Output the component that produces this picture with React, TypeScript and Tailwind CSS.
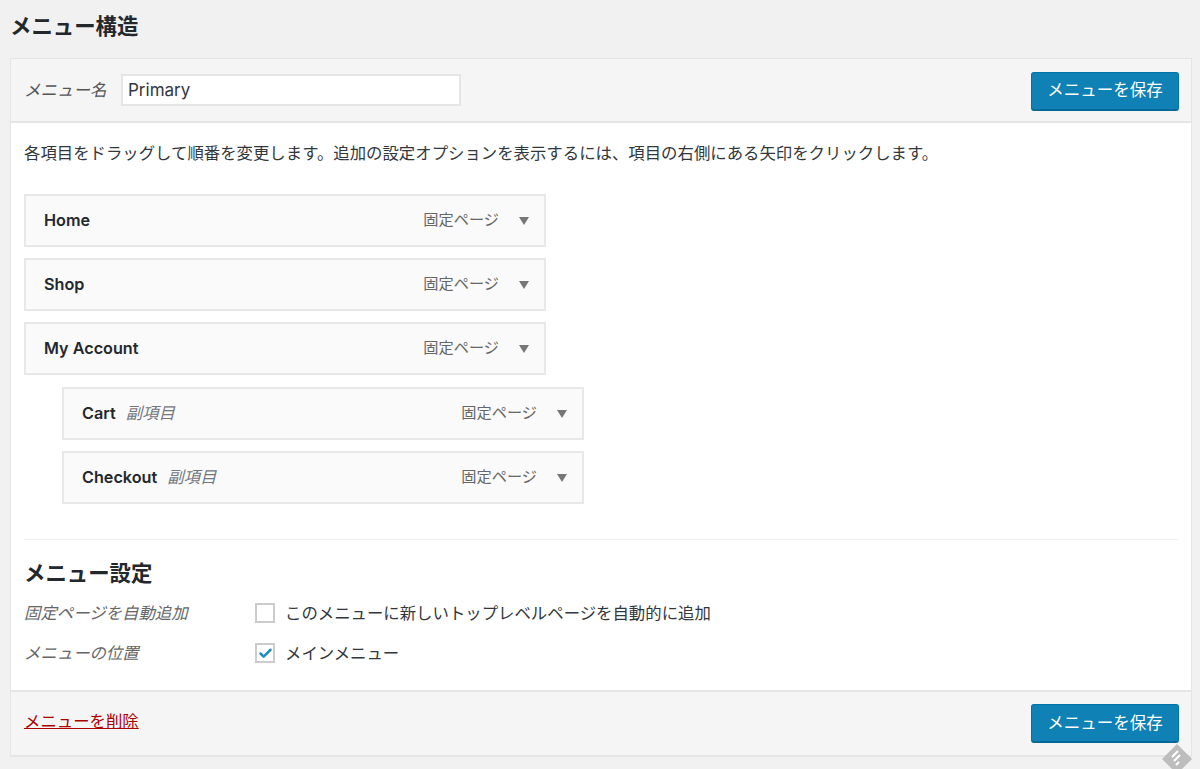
import { Check } from 'lucide-react';

const font = { fontFamily: 'Inter, "Noto Sans CJK JP", sans-serif' };

function SaveButton() {
  return (
    <button className="h-[39px] w-[148px] rounded-[3px] border border-[#0073aa] border-b-[#006799] border-b-2 bg-[#0f81b5] text-[16.5px] leading-none text-white">
      メニューを保存
    </button>
  );
}

function MenuItem({ title, sub, nested }: { title: string; sub?: boolean; nested?: boolean }) {
  return (
    <div
      className={`flex h-[53px] w-[522px] items-center border-2 border-[#e8e8e8] bg-[#fafafa] pl-[18px] pr-[15px] ${nested ? 'ml-[38px]' : ''}`}
    >
      <span className="text-[16.2px] font-semibold text-[#23282d]">{title}</span>
      {sub && <span className="ml-[10px] text-[16.4px] italic text-[#72777c]">副項目</span>}
      <span className="ml-auto mr-[20px] text-[15.2px] text-[#666]">固定ページ</span>
      <svg width="10" height="8" viewBox="0 0 10 8">
        <path d="M0 0h10L5 8z" fill="#777" />
      </svg>
    </div>
  );
}

export default function App() {
  return (
    <div style={font} className="relative h-[769px] w-[1200px] overflow-hidden bg-[#f1f1f1] pl-[10px] text-[#32373c]">
      <h2 className="flex h-[58px] items-center pb-[6px] text-[21.4px] font-bold text-[#23282d]">メニュー構造</h2>
      <div className="w-[1182px] border border-[#e5e5e5] bg-white shadow-[0_1px_1px_rgba(0,0,0,0.04)]">
        <div className="flex h-[64px] items-center border-b-2 border-[#e5e5e5] bg-[#f5f5f5] pl-[13px] pr-[12px]">
          <label className="w-[97px] text-[16.5px] italic text-[#555]">メニュー名</label>
          <input
            readOnly
            value="Primary"
            className="h-[32px] w-[340px] border-2 border-[#e5e5e5] bg-white px-[5px] text-[17px] text-[#32373c]"
          />
          <div className="ml-auto mt-[2px]">
            <SaveButton />
          </div>
        </div>
        <div className="px-[13px]">
          <p className="pt-[18px] text-[16.4px] leading-[24px]">
            各項目をドラッグして順番を変更します。追加の設定オプションを表示するには、項目の右側にある矢印をクリックします。
          </p>
          <div className="mt-[29px] flex flex-col gap-[11px]">
            <MenuItem title="Home" />
            <MenuItem title="Shop" />
            <div className="mb-px">
              <MenuItem title="My Account" />
            </div>
            <MenuItem title="Cart" sub nested />
            <MenuItem title="Checkout" sub nested />
          </div>
          <div className="mt-[35px] border-t border-[#eeeeee]" />
          <h3 className="mt-[20px] text-[21.4px] font-bold leading-[26px] text-[#23282d]">メニュー設定</h3>
          <div className="mt-[17px] flex h-[40px] items-start">
            <span className="w-[231px] text-[16.4px] italic leading-[20px] text-[#666]">固定ページを自動追加</span>
            <span className="h-[20px] w-[20px] border-2 border-[#ccc] bg-white" />
            <span className="ml-[10px] text-[16.4px] leading-[20px]">このメニューに新しいトップレベルページを自動的に追加</span>
          </div>
          <div className="flex h-[47px] items-start">
            <span className="w-[231px] text-[16.4px] italic leading-[20px] text-[#666]">メニューの位置</span>
            <span className="flex h-[20px] w-[20px] items-center justify-center border-2 border-[#ccc] bg-white">
              <Check size={15} strokeWidth={4} className="text-[#1e8cbe]" />
            </span>
            <span className="ml-[10px] text-[16.4px] leading-[20px]">メインメニュー</span>
          </div>
        </div>
        <div className="flex h-[65px] items-center justify-between border-t-2 border-[#e5e5e5] bg-[#f5f5f5] pl-[13px] pr-[12px]">
          <a className="-translate-y-[2px] text-[16.4px] text-[#a00] underline">メニューを削除</a>
          <SaveButton />
        </div>
      </div>
      <svg width="32" height="32" viewBox="0 0 32 32" className="absolute left-[1161px] top-[743px]">
        <path d="M16 1l15 15-15 15L1 16z" fill="#bdbdbd" />
        <path d="M11 14l6-6M13 18l6-6M15 22l3-3" stroke="#fff" strokeWidth="2" fill="none" />
      </svg>
    </div>
  );
}
